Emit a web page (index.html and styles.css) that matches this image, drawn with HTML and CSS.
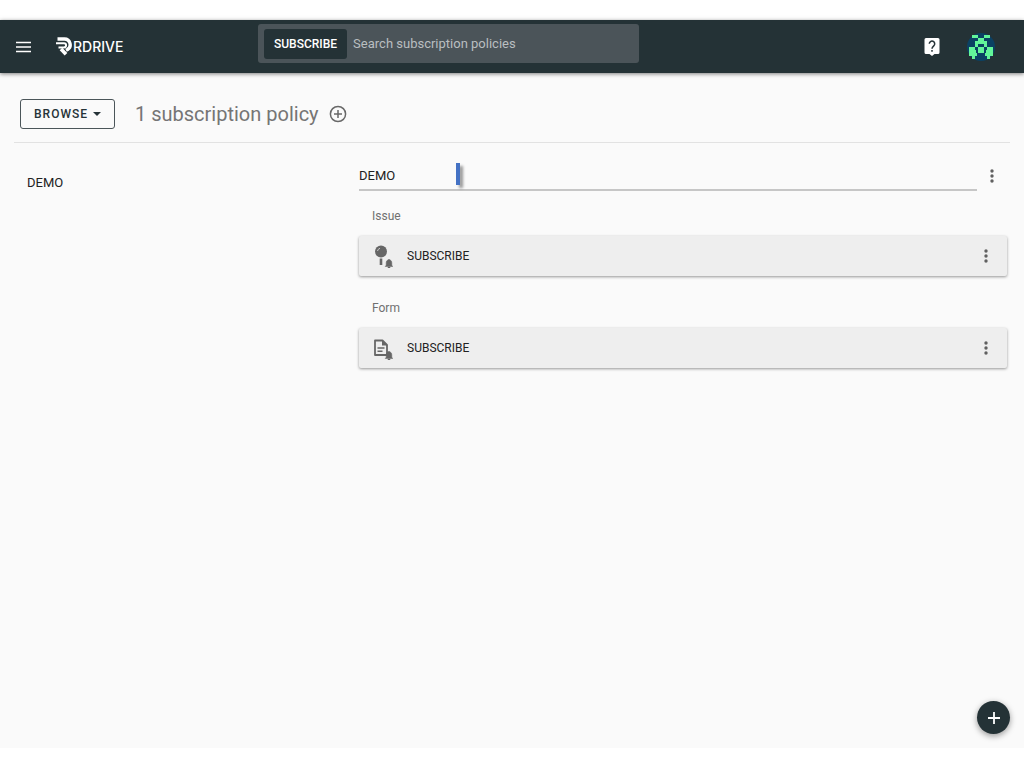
FILE: index.html
```
<!DOCTYPE html>
<html lang="en">

<head>
    <meta charset="UTF-8">
    <meta name="viewport" content="width=device-width, initial-scale=1.0">
    <title>RDrive - Subscription policies</title>
    <link rel="stylesheet" href="styles.css">
</head>

<body>
    <div class="app">
        <header class="topbar">
            <div class="topbar-left">
                <button type="button" class="icon-btn" aria-label="Menu">
                    <svg width="16" height="12" viewBox="0 0 16 12"><path d="M0 1.500h15M0 6h15M0 10.500h15" stroke="#fff" stroke-width="1.700"/></svg>
                </button>
                <a href="#" class="logo">
                    <svg width="17" height="19" viewBox="0 0 17 19" fill="none" stroke="#fff">
                        <path d="M1.500 2h7a5.700 5.700 0 0 1 3 10.500l-1.500.8" stroke-width="3.400"/>
                        <path d="M0 6.200h8a2 2 0 0 1 0 4.200H2.500" stroke-width="2"/>
                        <path d="M5 12l5 5.300" stroke-width="3.600"/>
                    </svg>
                    <span>RDRIVE</span>
                </a>
            </div>
            <form class="search">
                <button type="button" class="search-tag">SUBSCRIBE</button>
                <input type="text" class="search-input" aria-label="Search" placeholder="Search subscription policies">
            </form>
            <div class="topbar-right">
                <button type="button" class="icon-btn" aria-label="Help">
                    <svg width="16" height="18" viewBox="0 0 16 18">
                        <path d="M2 0h12a1.5 1.5 0 0 1 1.5 1.5v13A1.5 1.5 0 0 1 14 16h-3.5L8 18l-2.500-2H2a1.500 1.500 0 0 1-1.500-1.500v-13A1.500 1.500 0 0 1 2 0z" fill="#fff"/>
                        <path d="M5.300 5.800a2.700 2.700 0 1 1 4.600 1.900C8.700 8.700 8 9.200 8 10.700M8 12v1.800" fill="none" stroke="#263338" stroke-width="1.500"/>
                    </svg>
                </button>
                <button type="button" class="icon-btn" aria-label="Account">
                    <svg width="30" height="30" viewBox="0 0 30 30">
                        <circle cx="15" cy="15" r="14" fill="#0b4163"/>
                        <path d="M6 3h6v3H6zM18 3h6v3h-6zM12 6h6v3h-6zM9 9h12v3H9zM9 12h3v3H9zM18 12h3v3h-3zM3 15h6v3H3zM12 15h6v3h-6zM21 15h6v3h-6zM3 18h7v3H3zM12 18h6v3h-6zM20 18h7v3h-7zM3 21h8v3H3zM19 21h8v3h-8zM6 24h3v3H6zM21 24h3v3h-3z" fill="#62f59a"/>
                    </svg>
                </button>
            </div>
        </header>

        <main class="content">
            <div class="toolbar">
                <button type="button" class="browse">BROWSE
                    <svg width="8" height="4" viewBox="0 0 8 4"><path d="M0 0h8L4 4z" fill="#263338"/></svg>
                </button>
                <h1 class="title">1 subscription policy</h1>
                <button type="button" class="icon-btn" aria-label="Add policy">
                    <svg width="18" height="18" viewBox="0 0 18 18" fill="none" stroke="#686868" stroke-width="1.500"><circle cx="9" cy="9" r="7.600"/><path d="M9 5v8M5 9h8"/></svg>
                </button>
            </div>

            <div class="columns">
                <nav class="side">
                    <a href="#demo">DEMO</a>
                </nav>
                <section class="policies" id="demo">
                    <div class="group-head">
                        <h2 class="group-name">DEMO</h2>
                        <button type="button" class="icon-btn" aria-label="Group options">
                            <svg width="6" height="14" viewBox="0 0 6 14" fill="#606060"><circle cx="3" cy="2" r="1.700"/><circle cx="3" cy="7" r="1.700"/><circle cx="3" cy="12" r="1.700"/></svg>
                        </button>
                        <span class="marker"></span>
                    </div>

                    <h3 class="type">Issue</h3>
                    <div class="card">
                        <svg width="20" height="24" viewBox="0 0 20 24" fill="#666">
                            <circle cx="8" cy="7.500" r="6"/>
                            <path d="M6.700 14.500h2.600v6.500H6.700z"/>
                            <path d="M4.500 7a3.500 3.500 0 0 1 2.500-2.700" fill="none" stroke="#ccc"/>
                            <path d="M12.200 22.500l1-1.300v-2.400c0-1.600.8-2.400 2-2.700v-.6h1.600v.6c1.200.3 2 1.100 2 2.700v2.400l1 1.300zM15 23h2v1h-2z" stroke="#666" stroke-width=".5"/>
                        </svg>
                        <span class="card-name">SUBSCRIBE</span>
                        <button type="button" class="icon-btn" aria-label="Issue options">
                            <svg width="6" height="14" viewBox="0 0 6 14" fill="#606060"><circle cx="3" cy="2" r="1.700"/><circle cx="3" cy="7" r="1.700"/><circle cx="3" cy="12" r="1.700"/></svg>
                        </button>
                    </div>

                    <h3 class="type">Form</h3>
                    <div class="card">
                        <svg width="20" height="24" viewBox="0 0 20 24" fill="#666">
                            <path d="M2 4.500h7.500L14 9v10H2z" fill="none" stroke="#666" stroke-width="1.800" stroke-linejoin="round"/>
                            <path d="M9 4v5.500h5.500z"/>
                            <path d="M4.500 12h7M4.500 15.300h5" stroke="#666" stroke-width="1.400"/>
                            <path d="M12.200 22.500l1-1.300v-2.400c0-1.600.8-2.400 2-2.700v-.6h1.600v.6c1.200.3 2 1.100 2 2.700v2.400l1 1.300zM15 23h2v1h-2z" stroke="#666" stroke-width=".5"/>
                        </svg>
                        <span class="card-name">SUBSCRIBE</span>
                        <button type="button" class="icon-btn" aria-label="Form options">
                            <svg width="6" height="14" viewBox="0 0 6 14" fill="#606060"><circle cx="3" cy="2" r="1.700"/><circle cx="3" cy="7" r="1.700"/><circle cx="3" cy="12" r="1.700"/></svg>
                        </button>
                    </div>
                </section>
            </div>
        </main>

        <button type="button" class="fab" aria-label="Add">
            <svg width="12" height="12" viewBox="0 0 12 12"><path d="M6 0v12M0 6h12" stroke="#fff" stroke-width="1.800"/></svg>
        </button>
    </div>
</body>

</html>
```
FILE: styles.css
```
* {
    margin: 0;
    padding: 0;
    box-sizing: border-box;
}

body {
    height: 100vh;
    padding: 20px 0;
    background: #fff;
    color: #222;
    font-family: Roboto, "Liberation Sans", sans-serif;
    font-size: 13px;
}

button,
input {
    border: none;
    background: none;
    font-family: inherit;
}

button {
    cursor: pointer;
}

svg {
    display: block;
    flex: none;
}

a {
    color: inherit;
    text-decoration: none;
}

.app {
    position: relative;
    min-height: 100%;
    background: #fafafa;
}

/* top bar */
.topbar {
    display: flex;
    height: 53px;
    background: #243236;
    box-shadow: 0 1px 4px rgba(0, 0, 0, 0.5);
}

.topbar-left {
    display: flex;
    align-items: center;
    gap: 24px;
    width: 258px;
    padding-left: 16px;
}

.logo {
    display: flex;
    align-items: center;
    color: #fff;
    font-family: Inter, sans-serif;
    font-size: 14px;
    font-weight: 500;
}

.search {
    display: flex;
    align-items: center;
    gap: 6px;
    width: 381px;
    height: 39px;
    margin-top: 4px;
    padding: 0 6px;
    border-radius: 3px;
    background: #4b5459;
}

.search-tag {
    height: 30px;
    padding: 0 10px;
    border-radius: 3px;
    background: #243236;
    color: #fff;
    font-size: 12px;
    font-weight: 500;
}

.search-input {
    flex: 1;
    min-width: 0;
    color: #fff;
    font-size: 13px;
}

.search-input::placeholder {
    color: #b9bec0;
}

.topbar-right {
    display: flex;
    align-items: center;
    gap: 26px;
    margin-left: auto;
    padding-right: 28px;
}

/* toolbar */
.content {
    padding: 0 14px;
}

.toolbar {
    display: flex;
    align-items: center;
    height: 70px;
    padding: 13px 6px 0;
    border-bottom: 1px solid #e2e2e2;
}

.browse {
    display: flex;
    align-items: center;
    gap: 5px;
    height: 30px;
    padding: 0 13px;
    border: 1px solid #4b5559;
    border-radius: 3px;
    color: #263338;
    font-size: 12px;
    font-weight: 500;
    letter-spacing: 1px;
}

.title {
    margin: 0 10px 0 20px;
    color: #757575;
    font-size: 20px;
    font-weight: 400;
}

/* policies */
.columns {
    display: grid;
    grid-template-columns: 345px 1fr;
}

.side {
    padding: 32px 13px;
}

.policies {
    padding: 17px 3px 0 0;
}

.group-head {
    position: relative;
    display: flex;
    align-items: center;
    gap: 12px;
    padding-right: 12px;
}

.group-name {
    flex: 1;
    height: 31px;
    border-bottom: 2px solid #c6c6c6;
    font-size: 13px;
    font-weight: 400;
    line-height: 32px;
}

.marker {
    position: absolute;
    top: 3px;
    left: 97px;
    width: 4px;
    height: 22px;
    background: #4472c4;
    box-shadow: 3px 3px 3px rgba(0, 0, 0, 0.4);
}

.type {
    padding: 5px 13px 0;
    color: #707070;
    font-size: 12px;
    font-weight: 400;
    line-height: 40px;
}

.card {
    display: flex;
    align-items: center;
    gap: 14px;
    height: 40px;
    margin-bottom: 7px;
    padding: 0 18px 0 14px;
    border-radius: 2px;
    background: #eee;
    box-shadow: 0 1px 3px rgba(0, 0, 0, 0.4);
}

.card-name {
    flex: 1;
    font-size: 12px;
}

.fab {
    position: absolute;
    right: 14px;
    bottom: 14px;
    display: flex;
    align-items: center;
    justify-content: center;
    width: 33px;
    height: 33px;
    border-radius: 50%;
    background: #243236;
    box-shadow: 0 2px 6px rgba(0, 0, 0, 0.4);
}
```
